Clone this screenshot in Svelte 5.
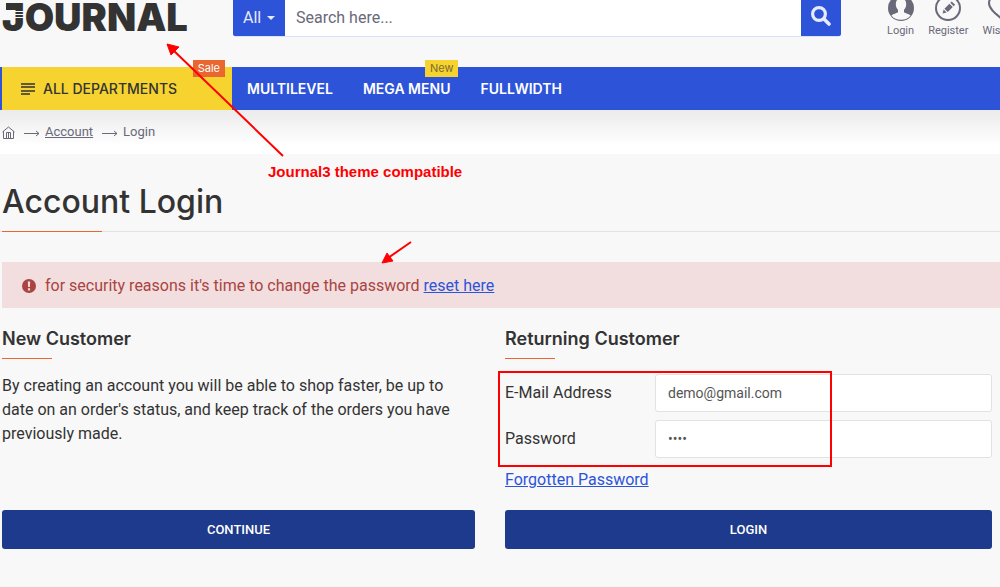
<script>
  let email = 'demo@gmail.com';
  let password = 'demo';
  let search = '';
  let category = 'All';

  const menu = [
    { label: 'MULTILEVEL' },
    { label: 'MEGA MENU', badge: 'New' },
    { label: 'FULLWIDTH' }
  ];
</script>

<div class="page">
  <header>
    <a class="logo" href="#home" aria-label="Journal">
      <span>JOURNAL</span>
      <i class="serif"></i>
      <i class="stripes"></i>
    </a>
    <form class="search" on:submit|preventDefault>
      <div class="category">
        <select aria-label="Category" bind:value={category}>
          <option>All</option>
        </select>
        <i class="caret"></i>
      </div>
      <input type="text" aria-label="Search" placeholder="Search here..." bind:value={search} />
      <button type="submit" aria-label="Search">
        <svg width="20" height="20" viewBox="0 0 20 20">
          <circle cx="8" cy="8" r="6.4" fill="none" stroke="#e6ebfb" stroke-width="3.2" />
          <path d="M13 13l5 5" stroke="#e6ebfb" stroke-width="3.6" stroke-linecap="round" />
        </svg>
      </button>
    </form>
    <div class="actions">
      <a href="#login">
        <svg width="26" height="21" viewBox="0 5 26 21">
          <circle cx="13" cy="13" r="13" fill="#69697a" />
          <path d="M13 3.5c3.4 0 5.2 2.3 5.2 5.7 0 2.6-1 4.3-2.2 5.6v2.1c0 1.1 5 1.7 6.6 3.5A12 12 0 0 1 13 24.7a12 12 0 0 1-9.6-4.3c1.6-1.8 6.6-2.4 6.6-3.5v-2.1c-1.2-1.3-2.2-3-2.2-5.6 0-3.4 1.8-5.7 5.2-5.7z" fill="#f8f8f8" />
        </svg>
        <span>Login</span>
      </a>
      <a href="#register">
        <svg width="26" height="21" viewBox="0 5 26 21">
          <circle cx="13" cy="13" r="12" fill="none" stroke="#69697a" stroke-width="2" />
          <path d="M7.6 18.6l1-4 3 3zM9.4 13.7l5-5 3.4 3.4-5 5zM15.3 7.8l1.4-1.4 3.4 3.4-1.4 1.4z" fill="#69697a" />
        </svg>
        <span>Register</span>
      </a>
      <a href="#wishlist">
        <svg width="28" height="21" viewBox="0 5 28 21">
          <path d="M14 24C8 19 1 14 1 8c0-4 3-7 6.5-7C10 1 12.500 2.500 14 5c1.500-2.500 4-4 6.500-4C24 1 27 4 27 8c0 6-7 11-13 16z" fill="none" stroke="#69697a" stroke-width="2" />
        </svg>
        <span>Wishlist</span>
      </a>
    </div>
  </header>

  <nav class="main-menu">
    <a class="departments" href="#departments">
      <svg width="14" height="12" viewBox="0 0 14 12">
        <path d="M0 1h14M0 4h14M0 8h14M0 11h9" stroke="#333" stroke-width="1.4" />
      </svg>
      ALL DEPARTMENTS
      <span class="badge sale">Sale</span>
    </a>
    {#each menu as item}
      <a href="#menu">
        {item.label}
        {#if item.badge}<span class="badge">{item.badge}</span>{/if}
      </a>
    {/each}
  </nav>

  <nav class="breadcrumb" aria-label="Breadcrumb">
    <a href="#home" aria-label="Home">
      <svg width="13" height="13" viewBox="0 0 13 13" fill="none" stroke="#69697a">
        <path d="M1.5 5.2v7.3h10V5.2M.5 6l6-5 6 5M4.5 12.500v-6h4v6M6.500 7v5" />
      </svg>
    </a>
    <svg class="arrow" width="16" height="7" viewBox="0 0 16 7" fill="none" stroke="#69697a">
      <path d="M0 3.5h15M12 1l3 2.5-3 2.5" />
    </svg>
    <a class="underlined" href="#account">Account</a>
    <svg class="arrow" width="16" height="7" viewBox="0 0 16 7" fill="none" stroke="#69697a">
      <path d="M0 3.5h15M12 1l3 2.5-3 2.5" />
    </svg>
    <a href="#login">Login</a>
  </nav>

  <h1>Account Login</h1>

  <main>
    <div class="alert" role="alert">
      <svg width="14" height="14" viewBox="0 0 14 14">
        <circle cx="7" cy="7" r="7" fill="#a94442" />
        <path d="M5.8 2.5h2.4l-.3 5.5H6.1zM5.900 9.200h2.200v2.200H5.900z" fill="#f2dede" />
      </svg>
      <p>for security reasons it's time to change the password <a href="#reset">reset here</a></p>
    </div>

    <div class="columns">
      <section>
        <h2>New Customer</h2>
        <p>By creating an account you will be able to shop faster, be up to date on an order's status, and keep track of the orders you have previously made.</p>
        <button class="btn" type="button">CONTINUE</button>
      </section>

      <section>
        <h2>Returning Customer</h2>
        <form on:submit|preventDefault>
          <div class="fields">
            <label for="email">E-Mail Address</label>
            <input id="email" type="text" bind:value={email} />
            <label for="password">Password</label>
            <input id="password" type="password" bind:value={password} />
            <i class="highlight"></i>
          </div>
          <a class="forgotten" href="#forgotten">Forgotten Password</a>
          <button class="btn" type="submit">LOGIN</button>
        </form>
      </section>
    </div>
  </main>

  <!-- red notes over the page -->
  <svg class="note-arrows" width="430" height="280" viewBox="0 0 430 280" aria-hidden="true">
    <g stroke="#f00" stroke-width="2" fill="#f00">
      <path d="M283 156L172 49M411 242L388 258" />
      <path d="M167 44l12 3-8 8zM382 263l5-10 6 8z" stroke-width="1" />
    </g>
  </svg>
  <strong class="note">Journal3 theme compatible</strong>
</div>

<style>
  :global(body) {
    background: #f8f8f8;
  }
  .page {
    position: relative;
    overflow: hidden;
    padding-bottom: 38px;
    font-family: Roboto, sans-serif;
    font-size: 16px;
    line-height: 24px;
    color: #333;
  }
  .page * {
    box-sizing: border-box;
  }
  a {
    color: inherit;
    text-decoration: none;
  }
  svg {
    display: block;
    flex-shrink: 0;
  }
  input, select, button {
    font-family: inherit;
    border: 0;
    margin: 0;
    outline: 0;
  }
  button {
    cursor: pointer;
  }

  /* header */
  header {
    display: flex;
    align-items: flex-start;
    height: 67px;
  }
  .logo {
    position: relative;
    width: 233px;
    padding-left: 2px;
    font-family: Inter, sans-serif;
    font-size: 38px;
    font-weight: 900;
    line-height: 34px;
  }
  .serif {
    position: absolute;
    left: 6px;
    top: 3px;
    width: 12px;
    height: 7px;
    background: #333;
  }
  .stripes {
    position: absolute;
    left: 15px;
    top: 11px;
    width: 9px;
    height: 8px;
    background: repeating-linear-gradient(#f8f8f8 0 1px, transparent 1px 3px);
  }
  .search {
    flex: 1;
    display: flex;
    height: 37px;
    border-bottom: 1px solid #dbe2f8;
    border-radius: 0 0 3px 3px;
    overflow: hidden;
  }
  .category {
    position: relative;
    width: 52px;
    background: #2d54d8;
  }
  .category select {
    appearance: none;
    width: 100%;
    height: 34px;
    padding: 0 10px;
    background: none;
    color: #e6ebfb;
    font-size: 16px;
  }
  .caret {
    position: absolute;
    right: 10px;
    top: 16px;
    border: 4px solid transparent;
    border-top-color: #e6ebfb;
    border-bottom: 0;
    pointer-events: none;
  }
  .search input {
    flex: 1;
    min-width: 0;
    height: 34px;
    padding: 0 11px;
    background: #fff;
    font-size: 16px;
    border-bottom: 0;
    box-shadow: 0 2px #fff;
  }
  .search input::placeholder {
    color: #69697a;
  }
  .search button {
    display: flex;
    justify-content: center;
    width: 40px;
    padding: 6px 0;
    background: #2d54d8;
  }
  .actions {
    display: flex;
    gap: 14px;
    width: 159px;
    padding-left: 46px;
    overflow: hidden;
    font-size: 11px;
    line-height: 20px;
    color: #69697a;
  }
  .actions a {
    display: flex;
    flex-direction: column;
    align-items: center;
    flex-shrink: 0;
  }

  /* menu */
  .main-menu {
    display: flex;
    height: 43px;
    padding-left: 2px;
    background: #2d54d8;
    font-family: Inter, sans-serif;
    font-size: 14px;
    font-weight: 600;
    line-height: 43px;
    color: #fff;
  }
  .main-menu a {
    position: relative;
    padding: 0 15px;
  }
  .main-menu .departments {
    display: flex;
    align-items: center;
    gap: 8px;
    width: 230px;
    padding-left: 19px;
    background: #f7d32f;
    color: #333;
    font-weight: 500;
  }
  .badge {
    position: absolute;
    right: 7px;
    top: -7px;
    padding: 0 5px;
    background: #f7d32f;
    color: #7b6d2f;
    font-size: 11px;
    font-weight: 400;
    line-height: 17px;
  }
  .badge.sale {
    background: #e96631;
    color: #fff;
  }

  /* breadcrumb */
  .breadcrumb {
    display: flex;
    align-items: center;
    height: 44px;
    padding-left: 2px;
    background: linear-gradient(#ebebeb, #fff 36px);
    font-size: 13px;
    color: #69697a;
  }
  .arrow {
    margin: 2px 5px 0 9px;
  }
  .underlined {
    text-decoration: underline;
  }

  h1 {
    position: relative;
    margin: 0;
    padding: 28px 2px 9px;
    border-bottom: 1px solid #e2e2e2;
    font-family: Inter, sans-serif;
    font-size: 32px;
    font-weight: 500;
    line-height: 40px;
  }
  h1::after {
    content: '';
    position: absolute;
    left: 2px;
    bottom: -1px;
    width: 100px;
    height: 1px;
    background: #e96631;
  }

  main {
    padding: 30px 0 0 2px;
  }
  .alert {
    display: flex;
    align-items: center;
    gap: 9px;
    padding: 12px 20px 10px;
    background: #f2dede;
    color: #a94442;
  }
  .alert a, .forgotten {
    color: #2d54d8;
    text-decoration: underline;
  }
  p {
    margin: 0;
  }

  .columns {
    display: grid;
    grid-template-columns: 473fr 487fr;
    gap: 30px;
    padding: 19px 8px 0 0;
  }
  section {
    display: flex;
    flex-direction: column;
  }
  h2 {
    margin: 0 0 15px;
    font-family: Inter, sans-serif;
    font-size: 18px;
    font-weight: 600;
    line-height: 24px;
  }
  h2::after {
    content: '';
    display: block;
    width: 50px;
    height: 1px;
    margin-top: 7px;
    background: #e96631;
  }
  .fields {
    position: relative;
    display: grid;
    grid-template-columns: 150px 1fr;
    align-items: center;
    row-gap: 8px;
  }
  .fields input {
    width: 100%;
    height: 38px;
    padding: 0 12px;
    border: 1px solid #e2e2e2;
    border-radius: 3px;
    background: #fff;
    font-size: 14px;
    color: #555;
  }
  .highlight {
    position: absolute;
    left: -7px;
    top: -3px;
    width: 334px;
    height: 96px;
    border: 2px solid #f00;
    pointer-events: none;
  }
  .forgotten {
    display: block;
    width: max-content;
    margin: 10px 0 18px;
  }
  .btn {
    width: 100%;
    height: 39px;
    margin-top: auto;
    border-radius: 3px;
    background: #1e3a8c;
    color: #fff;
    font-size: 13px;
    font-weight: 500;
  }

  .note-arrows {
    position: absolute;
    left: 0;
    top: 0;
    pointer-events: none;
  }
  .note {
    position: absolute;
    left: 268px;
    top: 160px;
    font-family: "Liberation Sans", Arial, sans-serif;
    font-size: 15px;
    color: #f00;
  }
</style>
